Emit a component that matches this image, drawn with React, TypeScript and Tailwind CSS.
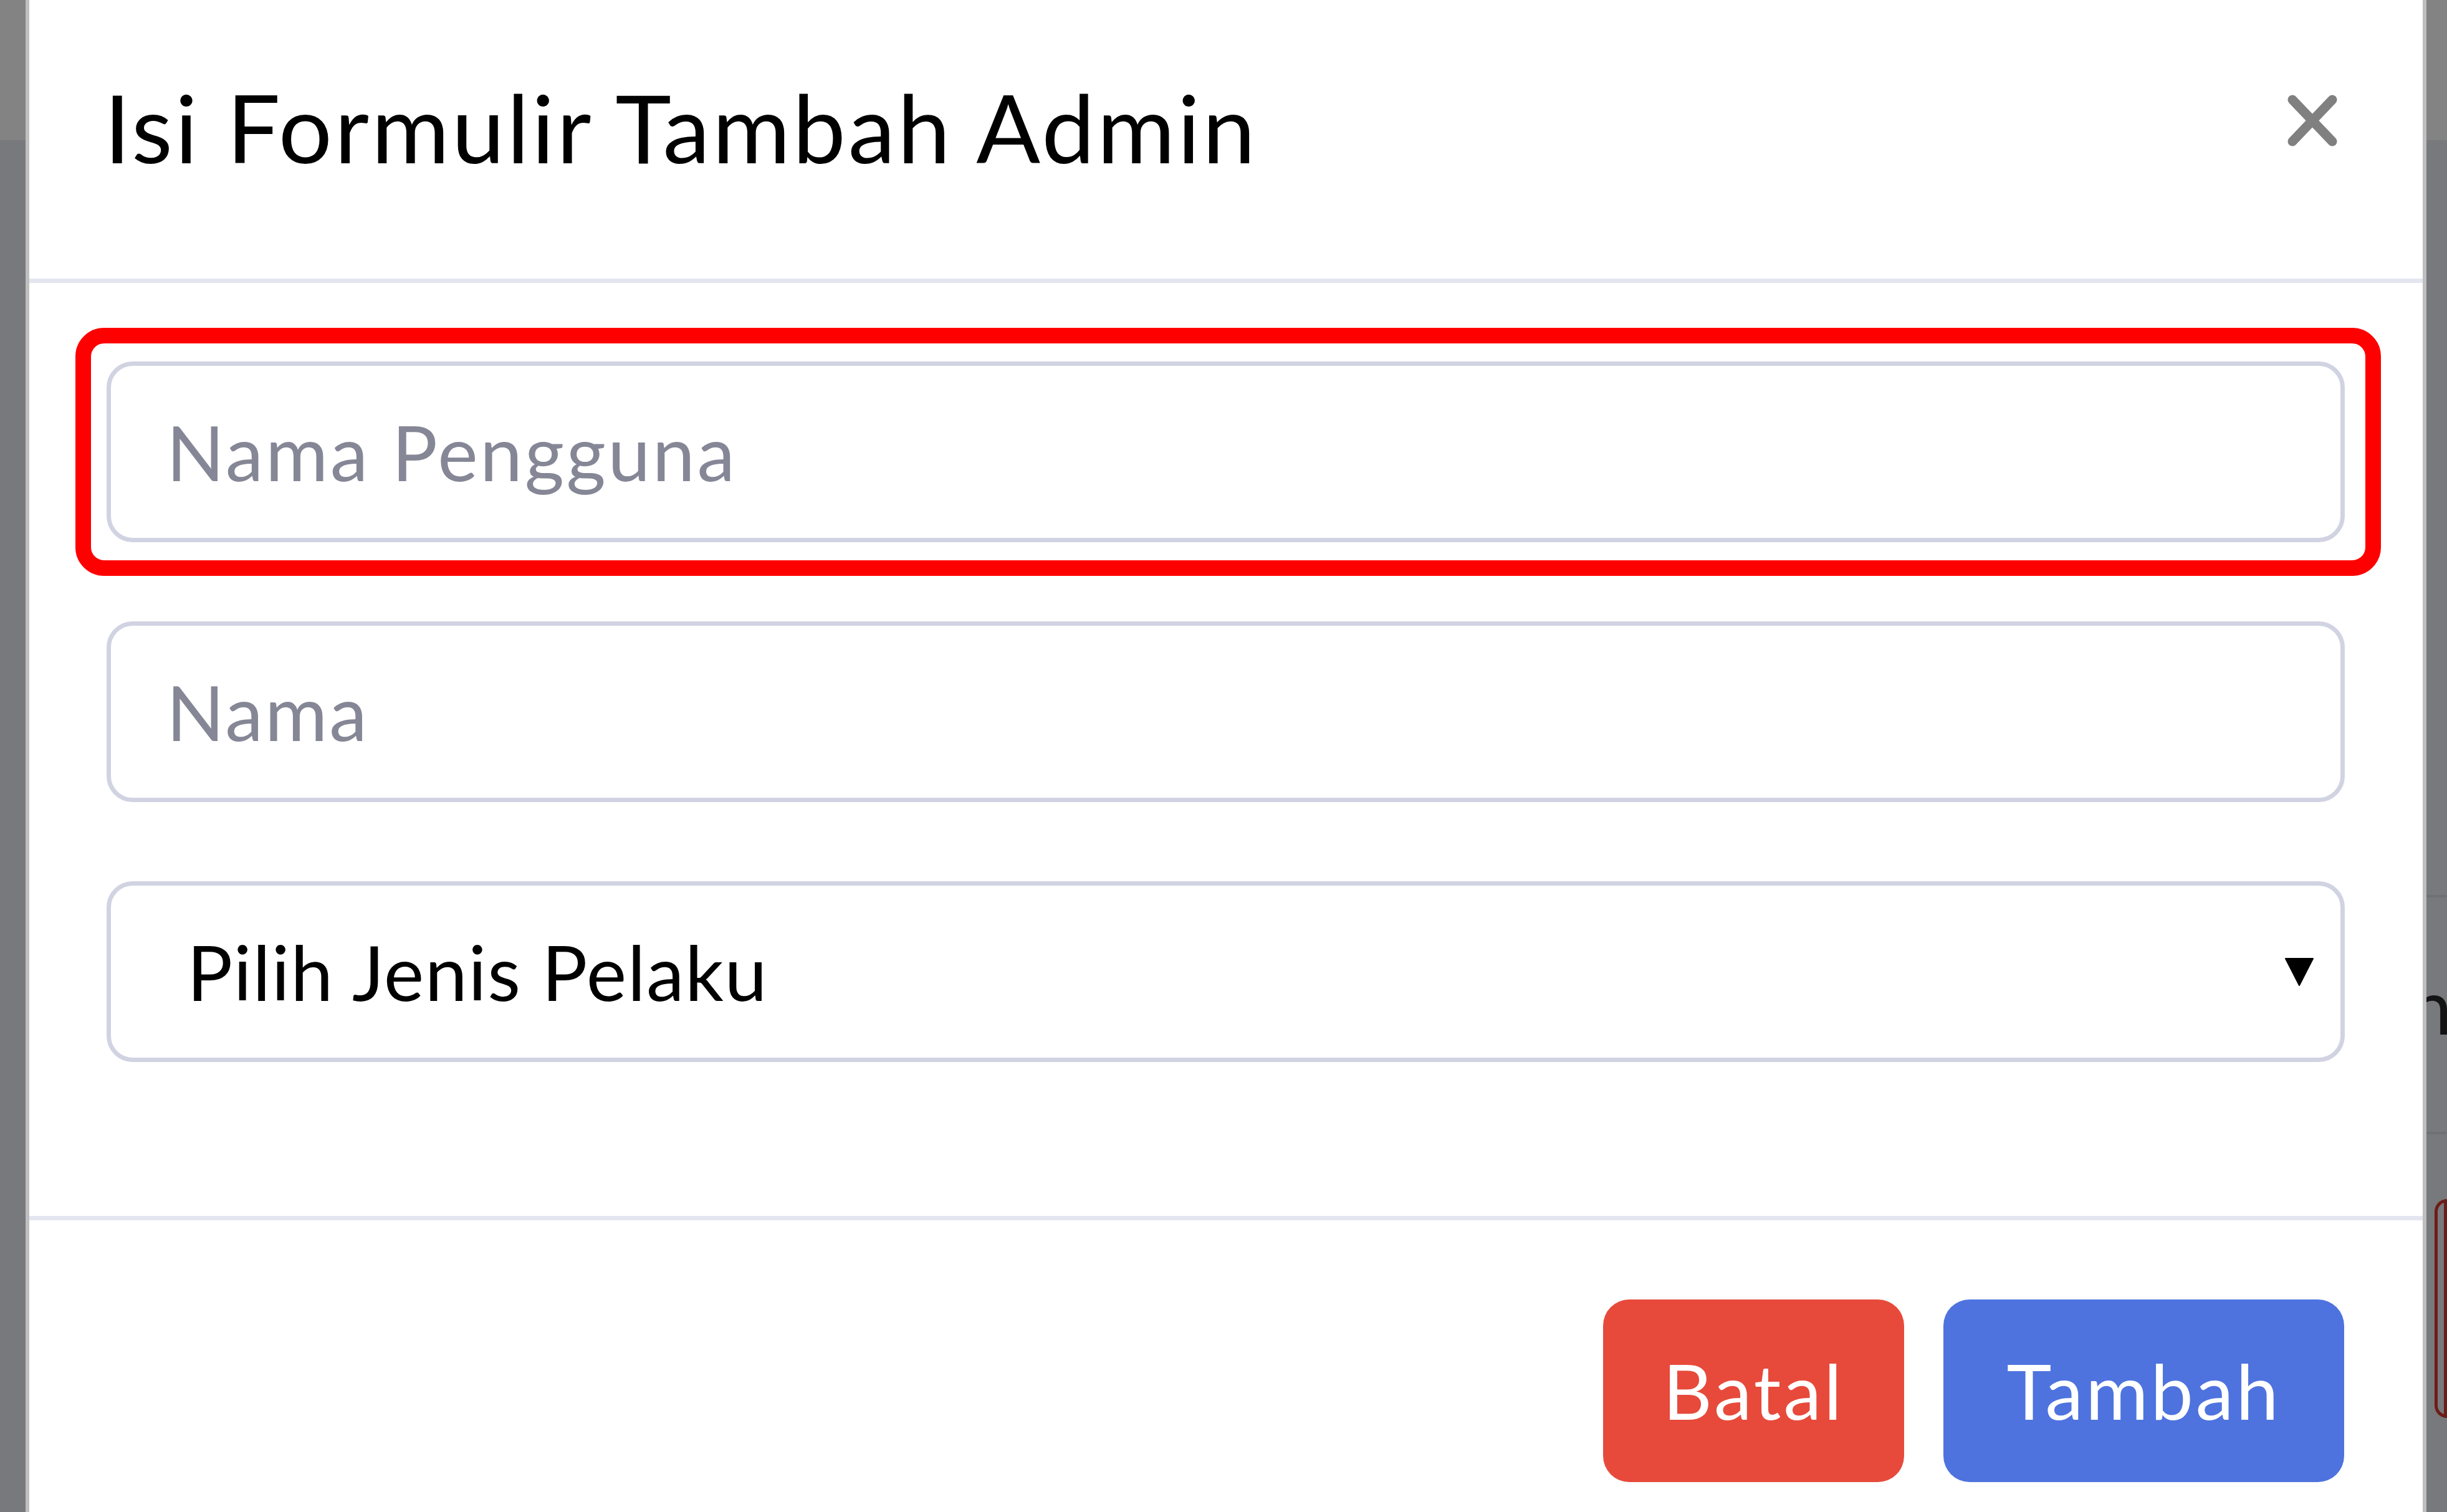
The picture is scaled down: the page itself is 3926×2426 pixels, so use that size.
import React from "react";

function CloseIcon() {
  return (
    <svg width="80" height="83" viewBox="0 0 80 83" aria-hidden="true">
      <line x1="8" y1="8" x2="72" y2="75" stroke="#808080" strokeWidth="15" strokeLinecap="round" />
      <line x1="72" y1="8" x2="8" y2="75" stroke="#808080" strokeWidth="15" strokeLinecap="round" />
    </svg>
  );
}

function Caret() {
  return (
    <svg width="46" height="46" viewBox="0 0 46 46" aria-hidden="true">
      <polygon points="1,2 45,2 23,45" fill="#000" stroke="#000" strokeWidth="2" strokeLinejoin="round" />
    </svg>
  );
}

export default function App() {
  return (
    <div className="relative h-[2426px] w-[3926px] overflow-hidden bg-[#78797c] font-['Lato',sans-serif]">
      {/* page behind the backdrop */}
      <div className="flex h-full flex-col">
        <div className="h-[225px] shrink-0 bg-[#838383]" />
        <div className="flex flex-1 justify-end">
          <div className="flex w-[60px] flex-col">
            <div className="h-[1215px] border-b-[4px] border-[#6f7073]" />
            <div className="h-[376px] pt-[100px] text-[122px] leading-[146px] text-[#141414]">n</div>
            <div className="h-[108px] border-t-[4px] border-[#6f7073]" />
            <div className="ml-[40px] h-[351px] rounded-l-[30px] border-[5px] border-[#6d1d17]" />
          </div>
        </div>
      </div>

      {/* modal */}
      <div className="absolute left-[41px] top-0 w-[3852px] border-x-[6px] border-black/25 bg-white">
        <div className="flex items-start justify-between border-b-[7px] border-[#e3e6f0] pb-[131px] pl-[120px] pr-[137px] pt-[91px]">
          <h5 className="text-[152px] font-normal leading-[225px] tracking-[3.8px] text-black">Isi Formulir Tambah Admin</h5>
          <button type="button" className="mt-[61px] block">
            <CloseIcon />
          </button>
        </div>

        <div className="flex flex-col gap-[127px] pb-[247px] pl-[124px] pr-[125px] pt-[126px]">
          <input
            type="text"
            placeholder="Nama Pengguna"
            className="h-[290px] w-full rounded-[42px] border-[7px] border-[#d1d3e2] bg-white pl-[89px] text-[122px] tracking-[3.5px] text-black outline-none placeholder:text-[#858796]"
          />
          <input
            type="text"
            placeholder="Nama"
            className="h-[290px] w-full rounded-[42px] border-[7px] border-[#d1d3e2] bg-white pl-[89px] text-[122px] tracking-[3px] text-black outline-none placeholder:text-[#858796]"
          />
          <div className="flex h-[290px] w-full items-center justify-between rounded-[42px] border-[7px] border-[#d1d3e2] bg-white pl-[122px] pr-[43px]">
            <span className="text-[122px] tracking-[1.5px] text-black">Pilih Jenis Pelaku</span>
            <Caret />
          </div>
        </div>

        <div className="flex h-[600px] items-start justify-end gap-[63px] border-t-[7px] border-[#e3e6f0] pr-[126px] pt-[127px]">
          <button type="button" className="flex h-[293px] w-[483px] items-center justify-center rounded-[42px] bg-[#e74a3b] text-[122px] tracking-[4px] text-white">
            Batal
          </button>
          <button type="button" className="flex h-[293px] w-[643px] items-center justify-center rounded-[42px] bg-[#4e73df] text-[122px] tracking-[4px] text-white">
            Tambah
          </button>
        </div>
      </div>

      {/* red annotation frame */}
      <div className="pointer-events-none absolute left-[121px] top-[526px] h-[398px] w-[3699px] rounded-[46px] border-[25px] border-[#ff0000]" />
    </div>
  );
}
